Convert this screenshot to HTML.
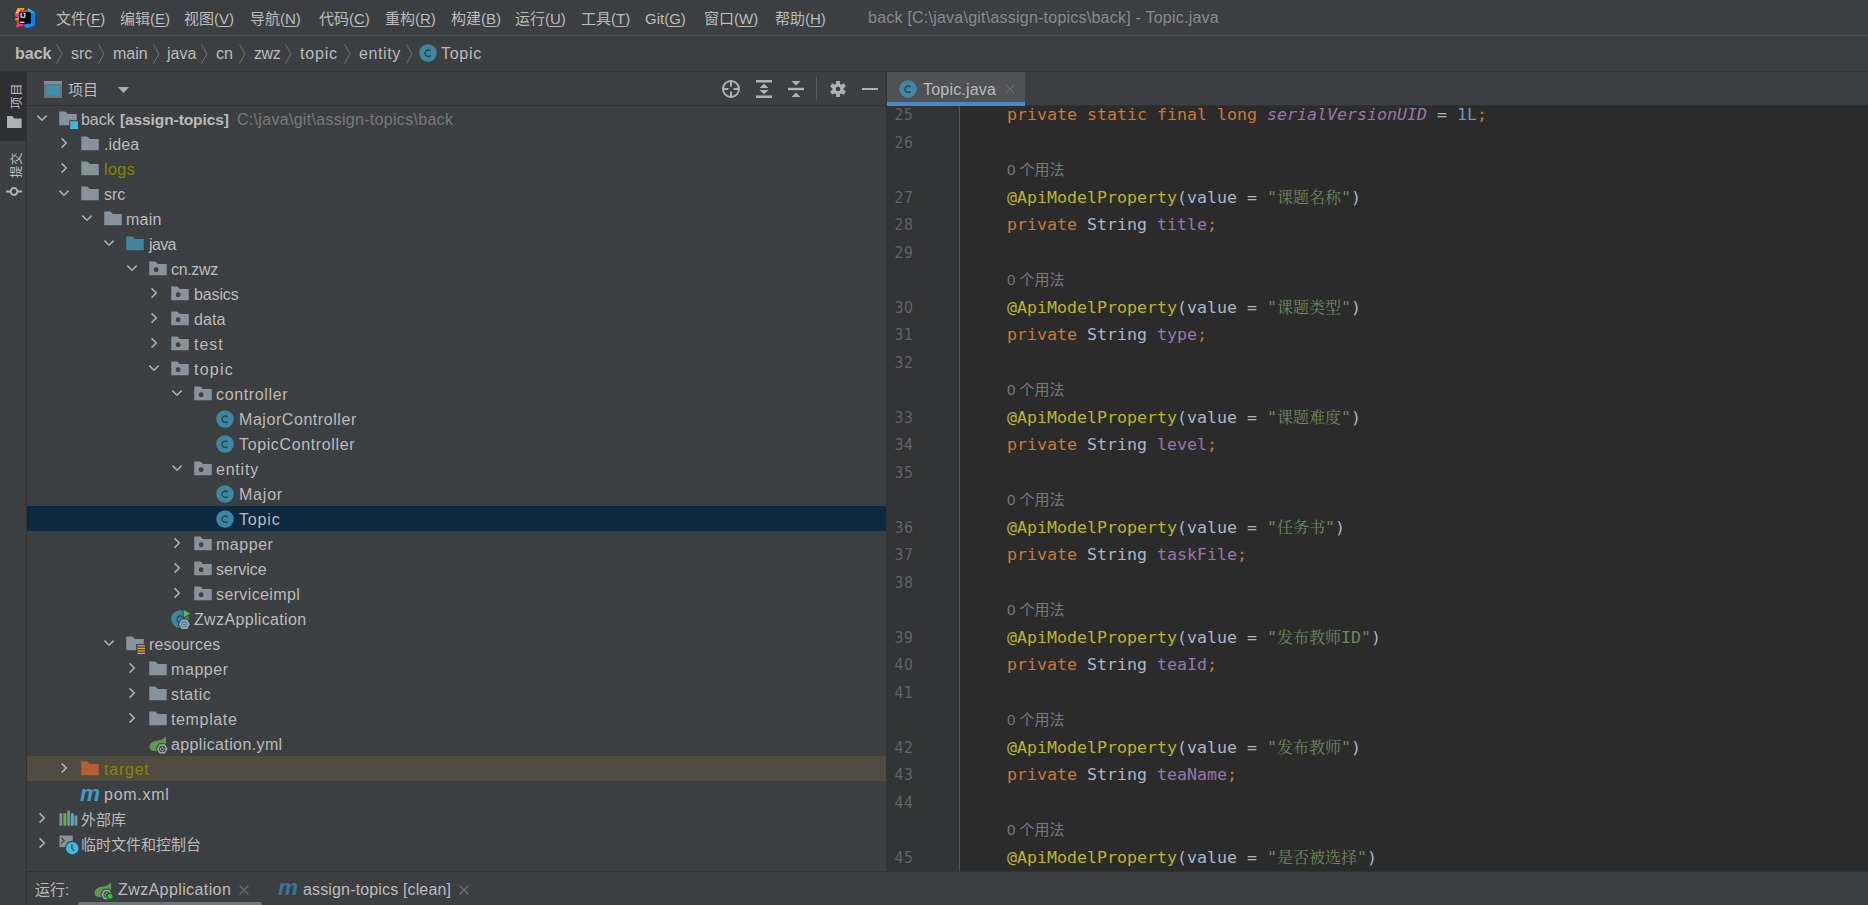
<!DOCTYPE html>
<html lang="zh"><head><meta charset="utf-8"><title>back - Topic.java</title>
<style>
*{box-sizing:border-box;margin:0;padding:0}
html,body{width:1868px;height:905px;overflow:hidden;background:#3c3f41}
body{position:relative;font-family:"Liberation Sans","Noto Sans CJK SC",sans-serif;font-size:15px;color:#bbbbbb}
.abs{position:absolute}
.t{position:absolute;white-space:pre;line-height:1}
u{text-decoration:underline;text-underline-offset:2px;text-decoration-thickness:1px}
#menubar{left:0;top:0;width:1868px;height:36px;border-bottom:1px solid #515151}
#navbar{left:0;top:36px;width:1868px;height:36px;border-bottom:1px solid #323232}
#strip{left:0;top:72px;width:27px;height:833px;border-right:1px solid #323232}
#proj{left:27px;top:72px;width:859px;height:799px;overflow:hidden}
#projhead{left:0;top:0;width:859px;height:34px;border-bottom:1px solid #323232}
.row{position:absolute;left:0;width:859px;height:25px}
.row .lbl{position:absolute;top:1px;height:25px;line-height:25px;white-space:pre;font-size:16px;letter-spacing:.5px}
.row .cj{font-size:15px;letter-spacing:0;top:1px}
.row svg{position:absolute}
#split{left:886px;top:72px;width:1px;height:799px;background:#323232}
#editor{left:887px;top:72px;width:981px;height:799px;overflow:hidden;background:#2b2b2b}
#tabs{left:0;top:0;width:981px;height:34px;background:#3c3f41;border-bottom:1px solid #323232}
#tab{left:0;top:0;width:138px;height:34px;background:#4e5254;border-bottom:4px solid #4a88c7}
#gutter{left:0;top:34px;width:73px;height:765px;background:#313335;border-right:1px solid #555555}
.ln{position:absolute;left:7.5px;font-family:"DejaVu Sans Condensed","Liberation Sans",sans-serif;font-size:15.6px;letter-spacing:.6px;color:#606366;height:27.5px;line-height:27.5px;white-space:pre}
.cl{position:absolute;left:120px;font-family:"DejaVu Sans Mono","Liberation Mono","Noto Serif CJK SC",monospace;font-size:16.61px;color:#a9b7c6;height:27.5px;line-height:27.5px;white-space:pre}
.hint{position:absolute;left:120px;font-size:15px;color:#787878;height:27.5px;line-height:27.5px;white-space:pre}
.z{font-size:16px} .k{color:#cc7832} .f{color:#9876aa} .a{color:#bbb529} .s{color:#6a8759} .n{color:#6897bb} .i{font-style:italic}
#bottom{left:27px;top:871px;width:1841px;height:34px;border-top:1px solid #323232}
</style></head>
<body>
<div id="menubar" class="abs">
<svg class="abs" style="left:14px;top:7px" width="22" height="22" viewBox="0 0 22 22">
<polygon points="3.5,1.2 10.5,1 8,7 1,7.5" fill="#fdb60d"/>
<polygon points="6.5,2.2 13,3.2 13.5,7 4.5,7" fill="#fe2857"/>
<polygon points="1,7.5 6,5 6,10.5 1.3,9.6" fill="#fc31a0"/>
<polygon points="1,11.5 6,9.8 6,13.8 1.5,13.5" fill="#fc801d"/>
<polygon points="2,20.6 3.4,13 9,16.5 9.5,18.4" fill="#fe2f6e"/>
<polygon points="13,3.2 14.6,1 21.2,6 17,7.5" fill="#07c3f2"/>
<polygon points="16.5,5.5 21.2,6 21,18.5 16.5,17.5" fill="#087cfa"/>
<polygon points="9,18.4 13.2,21.2 21,18.5 16.5,15" fill="#0a8df8"/>
<rect x="5" y="5.2" width="11.8" height="11.5" fill="#000"/>
<rect x="6" y="14.6" width="4.4" height="1.3" fill="#fff"/>
<text x="5.9" y="11.2" font-family="Liberation Sans,sans-serif" font-weight="bold" font-size="7.4" fill="#fff" style="letter-spacing:-.2px">IJ</text>
</svg>
<span class="t" style="left:56px;top:11px;font-size:15px">文件(<u>F</u>)</span>
<span class="t" style="left:120px;top:11px;font-size:15px">编辑(<u>E</u>)</span>
<span class="t" style="left:184px;top:11px;font-size:15px">视图(<u>V</u>)</span>
<span class="t" style="left:250px;top:11px;font-size:15px">导航(<u>N</u>)</span>
<span class="t" style="left:319px;top:11px;font-size:15px">代码(<u>C</u>)</span>
<span class="t" style="left:385px;top:11px;font-size:15px">重构(<u>R</u>)</span>
<span class="t" style="left:451px;top:11px;font-size:15px">构建(<u>B</u>)</span>
<span class="t" style="left:515px;top:11px;font-size:15px">运行(<u>U</u>)</span>
<span class="t" style="left:581px;top:11px;font-size:15px">工具(<u>T</u>)</span>
<span class="t" style="left:645px;top:11px;font-size:15px">Git(<u>G</u>)</span>
<span class="t" style="left:704px;top:11px;font-size:15px">窗口(<u>W</u>)</span>
<span class="t" style="left:775px;top:11px;font-size:15px">帮助(<u>H</u>)</span>
<span class="t" style="left:868px;top:10px;font-size:16px;letter-spacing:.23px;color:#87898b">back [C:\java\git\assign-topics\back] - Topic.java</span>
</div>
<div id="navbar" class="abs">
<span class="t" style="left:15px;top:10px;font-size:16px;letter-spacing:0px;font-weight:bold;">back</span>
<span class="t" style="left:71px;top:10px;font-size:16px;letter-spacing:0px;">src</span>
<span class="t" style="left:113px;top:10px;font-size:16px;letter-spacing:0px;">main</span>
<span class="t" style="left:167px;top:10px;font-size:16px;letter-spacing:0px;">java</span>
<span class="t" style="left:216px;top:10px;font-size:16px;letter-spacing:0px;">cn</span>
<span class="t" style="left:254px;top:10px;font-size:16px;letter-spacing:-0.4px;">zwz</span>
<span class="t" style="left:300px;top:10px;font-size:16px;letter-spacing:0.8px;">topic</span>
<span class="t" style="left:359px;top:10px;font-size:16px;letter-spacing:0.6px;">entity</span>
<svg class="abs" style="left:56px;top:8px" width="7" height="20" viewBox="0 0 7 20"><path d="M0.5 0.5 L6 10 L0.5 19.5" fill="none" stroke="#6e7072" stroke-width="1"/></svg>
<svg class="abs" style="left:98px;top:8px" width="7" height="20" viewBox="0 0 7 20"><path d="M0.5 0.5 L6 10 L0.5 19.5" fill="none" stroke="#6e7072" stroke-width="1"/></svg>
<svg class="abs" style="left:153px;top:8px" width="7" height="20" viewBox="0 0 7 20"><path d="M0.5 0.5 L6 10 L0.5 19.5" fill="none" stroke="#6e7072" stroke-width="1"/></svg>
<svg class="abs" style="left:201px;top:8px" width="7" height="20" viewBox="0 0 7 20"><path d="M0.5 0.5 L6 10 L0.5 19.5" fill="none" stroke="#6e7072" stroke-width="1"/></svg>
<svg class="abs" style="left:239px;top:8px" width="7" height="20" viewBox="0 0 7 20"><path d="M0.5 0.5 L6 10 L0.5 19.5" fill="none" stroke="#6e7072" stroke-width="1"/></svg>
<svg class="abs" style="left:285px;top:8px" width="7" height="20" viewBox="0 0 7 20"><path d="M0.5 0.5 L6 10 L0.5 19.5" fill="none" stroke="#6e7072" stroke-width="1"/></svg>
<svg class="abs" style="left:344px;top:8px" width="7" height="20" viewBox="0 0 7 20"><path d="M0.5 0.5 L6 10 L0.5 19.5" fill="none" stroke="#6e7072" stroke-width="1"/></svg>
<svg class="abs" style="left:406px;top:8px" width="7" height="20" viewBox="0 0 7 20"><path d="M0.5 0.5 L6 10 L0.5 19.5" fill="none" stroke="#6e7072" stroke-width="1"/></svg>
<svg class="abs" style="left:417.8px;top:7px" width="20" height="20" viewBox="0 0 16 16"><circle cx="8" cy="8" r="7" fill="#3e86a0"/><path d="M10.1 6.4 A2.6 2.6 0 1 0 10.1 10" fill="none" stroke="#274552" stroke-width="1.1"/></svg>
<span class="t" style="left:441px;top:10px;font-size:16px;letter-spacing:.7px">Topic</span>
</div>
<div id="strip" class="abs">
<div class="abs" style="left:0;top:0;width:26px;height:69px;background:#2d2f30"></div>
<span class="t" style="left:10.5px;top:36.5px;font-size:12.5px;letter-spacing:.4px;transform-origin:0 0;transform:rotate(-90deg);color:#bbbbbb">项目</span>
<svg class="abs" style="left:7px;top:44px" width="15" height="12" viewBox="0 0 15 12"><path d="M0 0 H5.2 L7.3 2.4 H14.6 V12 H0 Z" fill="#afb1b3"/></svg>
<span class="t" style="left:11px;top:106px;font-size:12.5px;letter-spacing:.4px;transform-origin:0 0;transform:rotate(-90deg);color:#bbbbbb">提交</span>
<svg class="abs" style="left:5px;top:114px" width="18" height="11" viewBox="0 0 18 11"><circle cx="9" cy="5.5" r="3.4" fill="none" stroke="#afb1b3" stroke-width="2"/><rect x="1" y="4.5" width="4.5" height="2" fill="#afb1b3"/><rect x="12.5" y="4.5" width="4.5" height="2" fill="#afb1b3"/></svg>
</div>
<div id="proj" class="abs">
<div id="projhead" class="abs">
<svg class="abs" style="left:17px;top:9px" width="18" height="17" viewBox="0 0 18 17"><rect x="0" y="0" width="18" height="17" fill="#68737a"/><rect x="0" y="0" width="18" height="3" fill="#808c94"/><rect x="2.5" y="5" width="13" height="9.5" fill="#3f91b0"/></svg>
<span class="t" style="left:41px;top:10px;font-size:15px">项目</span>
<svg class="abs" style="left:90.7px;top:15.4px" width="11" height="6" viewBox="0 0 11 6"><path d="M0 0 H11 L5.5 6 Z" fill="#afb1b3"/></svg>
<svg class="abs" style="left:694px;top:7px" width="20" height="20" viewBox="0 0 20 20"><circle cx="10" cy="10" r="8" fill="none" stroke="#afb1b3" stroke-width="2"/><path d="M10 2 V7.5 M10 12.5 V18 M2 10 H7.5 M12.5 10 H18" stroke="#afb1b3" stroke-width="2"/></svg>
<svg class="abs" style="left:729px;top:8px" width="16" height="18" viewBox="0 0 16 18"><rect x="0" y="0" width="16" height="2.5" fill="#afb1b3"/><rect x="0" y="15.5" width="16" height="2.5" fill="#afb1b3"/><path d="M3.5 8 L8 3.8 L12.5 8 Z M3.5 10 L8 14.2 L12.5 10 Z" fill="#afb1b3"/></svg>
<svg class="abs" style="left:761px;top:8px" width="16" height="18" viewBox="0 0 16 18"><rect x="0" y="7.8" width="16" height="2.4" fill="#afb1b3"/><path d="M3.5 1 L12.5 1 L8 5.6 Z M3.5 17 L12.5 17 L8 12.4 Z" fill="#afb1b3"/></svg>
<div class="abs" style="left:789px;top:5px;width:1px;height:24px;background:#5c5a55"></div>
<svg class="abs" style="left:803px;top:9px" width="16" height="16" viewBox="-8 -8 16 16"><g fill="#afb1b3"><circle r="5.6"/><rect x="-1.9" y="-8" width="3.8" height="4" transform="rotate(0)"/><rect x="-1.9" y="-8" width="3.8" height="4" transform="rotate(60)"/><rect x="-1.9" y="-8" width="3.8" height="4" transform="rotate(120)"/><rect x="-1.9" y="-8" width="3.8" height="4" transform="rotate(180)"/><rect x="-1.9" y="-8" width="3.8" height="4" transform="rotate(240)"/><rect x="-1.9" y="-8" width="3.8" height="4" transform="rotate(300)"/></g><circle r="2.3" fill="#3c3f41"/></svg>
<div class="abs" style="left:835px;top:16.3px;width:15.5px;height:2.2px;background:#afb1b3"></div>
</div>
<div class="row" style="top:34px;">
<svg style="left:7.799999999999997px;top:7.300000000000001px" width="14" height="10" viewBox="-7 -5 14 10"><path d="M-4.6 -2.4 L0 2.2 L4.6 -2.4" fill="none" stroke="#afb1b3" stroke-width="1.5"/></svg>
<svg style="left:30.5px;top:2.5px" width="20" height="20" viewBox="0 0 16 16"><path d="M1 13 H15 V4 H8 L6.7 2.7 C6.2 2.2 5.9 2 5.5 2 H1 Z" fill="#87939a"/><rect x="9" y="9" width="7.6" height="7.6" fill="#3c3f41"/><rect x="9.8" y="9.8" width="6.2" height="6.2" fill="#40b6e0"/></svg>
<span class="lbl" style="left:54px;color:#bbbbbb;letter-spacing:-.05px">back</span>
<span class="lbl" style="left:93px;color:#bbbbbb;font-weight:bold;font-size:15.5px;letter-spacing:-.1px">[assign-topics]</span>
<span class="lbl" style="left:210px;color:#787878;letter-spacing:.3px">C:\java\git\assign-topics\back</span>
</div>
<div class="row" style="top:59px;">
<svg style="left:32.3px;top:5px" width="10" height="14" viewBox="-5 -7 10 14"><path d="M-2.4 -4.6 L2.2 0 L-2.4 4.6" fill="none" stroke="#afb1b3" stroke-width="1.5"/></svg>
<svg style="left:53.0px;top:2.5px" width="20" height="20" viewBox="0 0 16 16"><path d="M1 13 H15 V4 H8 L6.7 2.7 C6.2 2.2 5.9 2 5.5 2 H1 Z" fill="#87939a"/></svg>
<span class="lbl" style="left:77px;color:#bbbbbb;letter-spacing:0.1px">.idea</span>
</div>
<div class="row" style="top:84px;">
<svg style="left:32.3px;top:5px" width="10" height="14" viewBox="-5 -7 10 14"><path d="M-2.4 -4.6 L2.2 0 L-2.4 4.6" fill="none" stroke="#afb1b3" stroke-width="1.5"/></svg>
<svg style="left:53.0px;top:2.5px" width="20" height="20" viewBox="0 0 16 16"><path d="M1 13 H15 V4 H8 L6.7 2.7 C6.2 2.2 5.9 2 5.5 2 H1 Z" fill="#87939a"/></svg>
<span class="lbl" style="left:77px;color:#848504;letter-spacing:0.44px">logs</span>
</div>
<div class="row" style="top:109px;">
<svg style="left:30.299999999999997px;top:7.300000000000001px" width="14" height="10" viewBox="-7 -5 14 10"><path d="M-4.6 -2.4 L0 2.2 L4.6 -2.4" fill="none" stroke="#afb1b3" stroke-width="1.5"/></svg>
<svg style="left:53.0px;top:2.5px" width="20" height="20" viewBox="0 0 16 16"><path d="M1 13 H15 V4 H8 L6.7 2.7 C6.2 2.2 5.9 2 5.5 2 H1 Z" fill="#87939a"/></svg>
<span class="lbl" style="left:77px;color:#bbbbbb;letter-spacing:-0.1px">src</span>
</div>
<div class="row" style="top:134px;">
<svg style="left:52.8px;top:7.300000000000001px" width="14" height="10" viewBox="-7 -5 14 10"><path d="M-4.6 -2.4 L0 2.2 L4.6 -2.4" fill="none" stroke="#afb1b3" stroke-width="1.5"/></svg>
<svg style="left:75.5px;top:2.5px" width="20" height="20" viewBox="0 0 16 16"><path d="M1 13 H15 V4 H8 L6.7 2.7 C6.2 2.2 5.9 2 5.5 2 H1 Z" fill="#87939a"/></svg>
<span class="lbl" style="left:99px;color:#bbbbbb;letter-spacing:0.23px">main</span>
</div>
<div class="row" style="top:159px;">
<svg style="left:75.3px;top:7.300000000000001px" width="14" height="10" viewBox="-7 -5 14 10"><path d="M-4.6 -2.4 L0 2.2 L4.6 -2.4" fill="none" stroke="#afb1b3" stroke-width="1.5"/></svg>
<svg style="left:98.0px;top:2.5px" width="20" height="20" viewBox="0 0 16 16"><path d="M1 13 H15 V4 H8 L6.7 2.7 C6.2 2.2 5.9 2 5.5 2 H1 Z" fill="#3e86a0"/></svg>
<span class="lbl" style="left:122px;color:#bbbbbb;letter-spacing:-0.64px">java</span>
</div>
<div class="row" style="top:184px;">
<svg style="left:97.8px;top:7.300000000000001px" width="14" height="10" viewBox="-7 -5 14 10"><path d="M-4.6 -2.4 L0 2.2 L4.6 -2.4" fill="none" stroke="#afb1b3" stroke-width="1.5"/></svg>
<svg style="left:120.5px;top:2.5px" width="20" height="20" viewBox="0 0 16 16"><path d="M1 13 H15 V4 H8 L6.7 2.7 C6.2 2.2 5.9 2 5.5 2 H1 Z" fill="#87939a"/><circle cx="6.5" cy="8.6" r="1.95" fill="#3b4145"/></svg>
<span class="lbl" style="left:144px;color:#bbbbbb;letter-spacing:-0.34px">cn.zwz</span>
</div>
<div class="row" style="top:209px;">
<svg style="left:122.3px;top:5px" width="10" height="14" viewBox="-5 -7 10 14"><path d="M-2.4 -4.6 L2.2 0 L-2.4 4.6" fill="none" stroke="#afb1b3" stroke-width="1.5"/></svg>
<svg style="left:143.0px;top:2.5px" width="20" height="20" viewBox="0 0 16 16"><path d="M1 13 H15 V4 H8 L6.7 2.7 C6.2 2.2 5.9 2 5.5 2 H1 Z" fill="#87939a"/><circle cx="6.5" cy="8.6" r="1.95" fill="#3b4145"/></svg>
<span class="lbl" style="left:167px;color:#bbbbbb;letter-spacing:-0.14px">basics</span>
</div>
<div class="row" style="top:234px;">
<svg style="left:122.3px;top:5px" width="10" height="14" viewBox="-5 -7 10 14"><path d="M-2.4 -4.6 L2.2 0 L-2.4 4.6" fill="none" stroke="#afb1b3" stroke-width="1.5"/></svg>
<svg style="left:143.0px;top:2.5px" width="20" height="20" viewBox="0 0 16 16"><path d="M1 13 H15 V4 H8 L6.7 2.7 C6.2 2.2 5.9 2 5.5 2 H1 Z" fill="#87939a"/><circle cx="6.5" cy="8.6" r="1.95" fill="#3b4145"/></svg>
<span class="lbl" style="left:167px;color:#bbbbbb;letter-spacing:0.1px">data</span>
</div>
<div class="row" style="top:259px;">
<svg style="left:122.3px;top:5px" width="10" height="14" viewBox="-5 -7 10 14"><path d="M-2.4 -4.6 L2.2 0 L-2.4 4.6" fill="none" stroke="#afb1b3" stroke-width="1.5"/></svg>
<svg style="left:143.0px;top:2.5px" width="20" height="20" viewBox="0 0 16 16"><path d="M1 13 H15 V4 H8 L6.7 2.7 C6.2 2.2 5.9 2 5.5 2 H1 Z" fill="#87939a"/><circle cx="6.5" cy="8.6" r="1.95" fill="#3b4145"/></svg>
<span class="lbl" style="left:167px;color:#bbbbbb;letter-spacing:0.96px">test</span>
</div>
<div class="row" style="top:284px;">
<svg style="left:120.3px;top:7.300000000000001px" width="14" height="10" viewBox="-7 -5 14 10"><path d="M-4.6 -2.4 L0 2.2 L4.6 -2.4" fill="none" stroke="#afb1b3" stroke-width="1.5"/></svg>
<svg style="left:143.0px;top:2.5px" width="20" height="20" viewBox="0 0 16 16"><path d="M1 13 H15 V4 H8 L6.7 2.7 C6.2 2.2 5.9 2 5.5 2 H1 Z" fill="#87939a"/><circle cx="6.5" cy="8.6" r="1.95" fill="#3b4145"/></svg>
<span class="lbl" style="left:167px;color:#bbbbbb;letter-spacing:1.25px">topic</span>
</div>
<div class="row" style="top:309px;">
<svg style="left:142.8px;top:7.300000000000001px" width="14" height="10" viewBox="-7 -5 14 10"><path d="M-4.6 -2.4 L0 2.2 L4.6 -2.4" fill="none" stroke="#afb1b3" stroke-width="1.5"/></svg>
<svg style="left:165.5px;top:2.5px" width="20" height="20" viewBox="0 0 16 16"><path d="M1 13 H15 V4 H8 L6.7 2.7 C6.2 2.2 5.9 2 5.5 2 H1 Z" fill="#87939a"/><circle cx="6.5" cy="8.6" r="1.95" fill="#3b4145"/></svg>
<span class="lbl" style="left:189px;color:#bbbbbb;letter-spacing:0.65px">controller</span>
</div>
<div class="row" style="top:334px;">
<svg style="left:188.0px;top:2.5px" width="20" height="20" viewBox="0 0 16 16"><circle cx="8" cy="8" r="7" fill="#3e86a0"/><path d="M10.1 6.4 A2.6 2.6 0 1 0 10.1 10" fill="none" stroke="#274552" stroke-width="1.1"/></svg>
<span class="lbl" style="left:212px;color:#bbbbbb;letter-spacing:0.56px">MajorController</span>
</div>
<div class="row" style="top:359px;">
<svg style="left:188.0px;top:2.5px" width="20" height="20" viewBox="0 0 16 16"><circle cx="8" cy="8" r="7" fill="#3e86a0"/><path d="M10.1 6.4 A2.6 2.6 0 1 0 10.1 10" fill="none" stroke="#274552" stroke-width="1.1"/></svg>
<span class="lbl" style="left:212px;color:#bbbbbb;letter-spacing:0.63px">TopicController</span>
</div>
<div class="row" style="top:384px;">
<svg style="left:142.8px;top:7.300000000000001px" width="14" height="10" viewBox="-7 -5 14 10"><path d="M-4.6 -2.4 L0 2.2 L4.6 -2.4" fill="none" stroke="#afb1b3" stroke-width="1.5"/></svg>
<svg style="left:165.5px;top:2.5px" width="20" height="20" viewBox="0 0 16 16"><path d="M1 13 H15 V4 H8 L6.7 2.7 C6.2 2.2 5.9 2 5.5 2 H1 Z" fill="#87939a"/><circle cx="6.5" cy="8.6" r="1.95" fill="#3b4145"/></svg>
<span class="lbl" style="left:189px;color:#bbbbbb;letter-spacing:0.78px">entity</span>
</div>
<div class="row" style="top:409px;">
<svg style="left:188.0px;top:2.5px" width="20" height="20" viewBox="0 0 16 16"><circle cx="8" cy="8" r="7" fill="#3e86a0"/><path d="M10.1 6.4 A2.6 2.6 0 1 0 10.1 10" fill="none" stroke="#274552" stroke-width="1.1"/></svg>
<span class="lbl" style="left:212px;color:#bbbbbb;letter-spacing:0.79px">Major</span>
</div>
<div class="row" style="top:434px;background:#0d293e;">
<svg style="left:188.0px;top:2.5px" width="20" height="20" viewBox="0 0 16 16"><circle cx="8" cy="8" r="7" fill="#3887a8"/><path d="M10.1 6.4 A2.6 2.6 0 1 0 10.1 10" fill="none" stroke="#274552" stroke-width="1.1"/></svg>
<span class="lbl" style="left:212px;color:#bbbbbb;letter-spacing:0.85px">Topic</span>
</div>
<div class="row" style="top:459px;">
<svg style="left:144.8px;top:5px" width="10" height="14" viewBox="-5 -7 10 14"><path d="M-2.4 -4.6 L2.2 0 L-2.4 4.6" fill="none" stroke="#afb1b3" stroke-width="1.5"/></svg>
<svg style="left:165.5px;top:2.5px" width="20" height="20" viewBox="0 0 16 16"><path d="M1 13 H15 V4 H8 L6.7 2.7 C6.2 2.2 5.9 2 5.5 2 H1 Z" fill="#87939a"/><circle cx="6.5" cy="8.6" r="1.95" fill="#3b4145"/></svg>
<span class="lbl" style="left:189px;color:#bbbbbb;letter-spacing:0.54px">mapper</span>
</div>
<div class="row" style="top:484px;">
<svg style="left:144.8px;top:5px" width="10" height="14" viewBox="-5 -7 10 14"><path d="M-2.4 -4.6 L2.2 0 L-2.4 4.6" fill="none" stroke="#afb1b3" stroke-width="1.5"/></svg>
<svg style="left:165.5px;top:2.5px" width="20" height="20" viewBox="0 0 16 16"><path d="M1 13 H15 V4 H8 L6.7 2.7 C6.2 2.2 5.9 2 5.5 2 H1 Z" fill="#87939a"/><circle cx="6.5" cy="8.6" r="1.95" fill="#3b4145"/></svg>
<span class="lbl" style="left:189px;color:#bbbbbb;letter-spacing:0.0px">service</span>
</div>
<div class="row" style="top:509px;">
<svg style="left:144.8px;top:5px" width="10" height="14" viewBox="-5 -7 10 14"><path d="M-2.4 -4.6 L2.2 0 L-2.4 4.6" fill="none" stroke="#afb1b3" stroke-width="1.5"/></svg>
<svg style="left:165.5px;top:2.5px" width="20" height="20" viewBox="0 0 16 16"><path d="M1 13 H15 V4 H8 L6.7 2.7 C6.2 2.2 5.9 2 5.5 2 H1 Z" fill="#87939a"/><circle cx="6.5" cy="8.6" r="1.95" fill="#3b4145"/></svg>
<span class="lbl" style="left:189px;color:#bbbbbb;letter-spacing:0.38px">serviceimpl</span>
</div>
<div class="row" style="top:534px;">
<svg style="left:143.0px;top:2.5px" width="21.25" height="21.25" viewBox="0 0 17 17"><circle cx="8" cy="8" r="7" fill="#3e86a0"/><path d="M10.1 6.4 A2.6 2.6 0 1 0 10.1 10" fill="none" stroke="#274552" stroke-width="1.1"/><path d="M10.2 -1 L17.4 3.6 L10.2 8.2 Z" fill="#3c3f41"/><path d="M10.9 0.5 L16.1 3.6 L10.9 6.7 Z" fill="#62b543"/><path d="M7.10 12.20 L9.30 8.37 H13.70 L15.90 12.20 L13.70 16.03 H9.30 Z" fill="#3c3f41" stroke="#3c3f41" stroke-width="1.6" stroke-linejoin="round"/><path d="M7.10 12.20 L9.30 8.37 H13.70 L15.90 12.20 L13.70 16.03 H9.30 Z" fill="#9aa7b0"/><circle cx="11.5" cy="12.2" r="2.55" fill="#3e86a0"/><path d="M10.45 11.25 A1.5 1.5 0 1 0 12.55 11.25" fill="none" stroke="#aab4bb" stroke-width=".75"/><path d="M11.5 10.30 V12.10" stroke="#aab4bb" stroke-width=".75"/></svg>
<span class="lbl" style="left:167px;color:#bbbbbb;letter-spacing:0.35px">ZwzApplication</span>
</div>
<div class="row" style="top:559px;">
<svg style="left:75.3px;top:7.300000000000001px" width="14" height="10" viewBox="-7 -5 14 10"><path d="M-4.6 -2.4 L0 2.2 L4.6 -2.4" fill="none" stroke="#afb1b3" stroke-width="1.5"/></svg>
<svg style="left:98.0px;top:2.5px" width="21.25" height="21.25" viewBox="0 0 17 17"><path d="M1 13 H15 V4 H8 L6.7 2.7 C6.2 2.2 5.9 2 5.5 2 H1 Z" fill="#87939a"/><rect x="9" y="8" width="8" height="9" fill="#3c3f41"/><path d="M10 9.5 H16 M10 11.5 H16 M10 13.5 H16 M10 15.5 H16" stroke="#e8a73f" stroke-width="1"/></svg>
<span class="lbl" style="left:122px;color:#bbbbbb;letter-spacing:0.12px">resources</span>
</div>
<div class="row" style="top:584px;">
<svg style="left:99.8px;top:5px" width="10" height="14" viewBox="-5 -7 10 14"><path d="M-2.4 -4.6 L2.2 0 L-2.4 4.6" fill="none" stroke="#afb1b3" stroke-width="1.5"/></svg>
<svg style="left:120.5px;top:2.5px" width="20" height="20" viewBox="0 0 16 16"><path d="M1 13 H15 V4 H8 L6.7 2.7 C6.2 2.2 5.9 2 5.5 2 H1 Z" fill="#87939a"/></svg>
<span class="lbl" style="left:144px;color:#bbbbbb;letter-spacing:0.58px">mapper</span>
</div>
<div class="row" style="top:609px;">
<svg style="left:99.8px;top:5px" width="10" height="14" viewBox="-5 -7 10 14"><path d="M-2.4 -4.6 L2.2 0 L-2.4 4.6" fill="none" stroke="#afb1b3" stroke-width="1.5"/></svg>
<svg style="left:120.5px;top:2.5px" width="20" height="20" viewBox="0 0 16 16"><path d="M1 13 H15 V4 H8 L6.7 2.7 C6.2 2.2 5.9 2 5.5 2 H1 Z" fill="#87939a"/></svg>
<span class="lbl" style="left:144px;color:#bbbbbb;letter-spacing:0.46px">static</span>
</div>
<div class="row" style="top:634px;">
<svg style="left:99.8px;top:5px" width="10" height="14" viewBox="-5 -7 10 14"><path d="M-2.4 -4.6 L2.2 0 L-2.4 4.6" fill="none" stroke="#afb1b3" stroke-width="1.5"/></svg>
<svg style="left:120.5px;top:2.5px" width="20" height="20" viewBox="0 0 16 16"><path d="M1 13 H15 V4 H8 L6.7 2.7 C6.2 2.2 5.9 2 5.5 2 H1 Z" fill="#87939a"/></svg>
<span class="lbl" style="left:144px;color:#bbbbbb;letter-spacing:0.64px">template</span>
</div>
<div class="row" style="top:659px;">
<svg style="left:120.5px;top:2.5px" width="21.25" height="21.25" viewBox="0 0 17 17"><path d="M1.30 11.20 C0.60 7.10 4.50 5.30 8.20 5.10 C10.80 4.90 12.80 3.50 13.90 1.90 C15.60 6.90 14.40 13.50 7.00 13.70 C5.20 13.80 3.40 13.50 2.20 12.80 Z" fill="#5a9c4b"/><path d="M7.10 11.90 L9.25 8.16 H13.55 L15.70 11.90 L13.55 15.64 H9.25 Z" fill="#3c3f41" stroke="#3c3f41" stroke-width="1.6" stroke-linejoin="round"/><path d="M7.10 11.90 L9.25 8.16 H13.55 L15.70 11.90 L13.55 15.64 H9.25 Z" fill="#9aa7b0"/><circle cx="11.4" cy="11.9" r="2.55" fill="#3c3f41"/><path d="M10.35 10.95 A1.5 1.5 0 1 0 12.45 10.95" fill="none" stroke="#aab4bb" stroke-width=".75"/><path d="M11.4 10.00 V11.80" stroke="#aab4bb" stroke-width=".75"/></svg>
<span class="lbl" style="left:144px;color:#bbbbbb;letter-spacing:0.38px">application.yml</span>
</div>
<div class="row" style="top:684px;background:#4f4b41;">
<svg style="left:32.3px;top:5px" width="10" height="14" viewBox="-5 -7 10 14"><path d="M-2.4 -4.6 L2.2 0 L-2.4 4.6" fill="none" stroke="#afb1b3" stroke-width="1.5"/></svg>
<svg style="left:53.0px;top:2.5px" width="20" height="20" viewBox="0 0 16 16"><path d="M1 13 H15 V4 H8 L6.7 2.7 C6.2 2.2 5.9 2 5.5 2 H1 Z" fill="#b85f32"/></svg>
<span class="lbl" style="left:77px;color:#848504;letter-spacing:0.78px">target</span>
</div>
<div class="row" style="top:709px;">
<span class="lbl" style="left:53.0px;top:0px;font-size:22.5px;letter-spacing:0;font-weight:bold;font-style:italic;color:#3f9ec1;">m</span>
<span class="lbl" style="left:77px;color:#bbbbbb;letter-spacing:0.73px">pom.xml</span>
</div>
<div class="row" style="top:734px;">
<svg style="left:9.799999999999997px;top:5px" width="10" height="14" viewBox="-5 -7 10 14"><path d="M-2.4 -4.6 L2.2 0 L-2.4 4.6" fill="none" stroke="#afb1b3" stroke-width="1.5"/></svg>
<svg style="left:30.5px;top:2.5px" width="20" height="20" viewBox="0 0 16 16"><rect x="1.2" y="3.4" width="2.2" height="9.9" fill="#87939a"/><rect x="4.3" y="3.4" width="2.4" height="9.9" fill="#62b543"/><rect x="7.4" y="1.3" width="2.1" height="12" fill="#87939a"/><rect x="10.2" y="3.4" width="2.4" height="9.9" fill="#40b6e0"/><rect x="13.2" y="5.2" width="2.3" height="8.1" fill="#87939a"/></svg>
<span class="lbl cj" style="left:54px;color:#bbbbbb">外部库</span>
</div>
<div class="row" style="top:759px;">
<svg style="left:9.799999999999997px;top:5px" width="10" height="14" viewBox="-5 -7 10 14"><path d="M-2.4 -4.6 L2.2 0 L-2.4 4.6" fill="none" stroke="#afb1b3" stroke-width="1.5"/></svg>
<svg style="left:30.5px;top:2.5px" width="21.25" height="21.25" viewBox="0 0 17 17"><rect x="1.2" y="1.2" width="10.6" height="9.3" fill="#87939a"/><path d="M2.6 3.1 L5 5.3 L2.6 7.5" fill="none" stroke="#3f464b" stroke-width="1"/><circle cx="11.4" cy="11.3" r="5.9" fill="#3c3f41"/><circle cx="11.4" cy="11.3" r="5" fill="#40b6e0"/><path d="M11.1 8.3 V11.6 L13 13.4" fill="none" stroke="#275a6e" stroke-width="1.1"/></svg>
<span class="lbl cj" style="left:54px;color:#bbbbbb">临时文件和控制台</span>
</div>
</div>
<div id="split" class="abs"></div>
<div id="editor" class="abs">
<div id="tabs" class="abs"><div id="tab" class="abs">
<svg class="abs" style="left:11px;top:7px" width="20" height="20" viewBox="0 0 16 16"><circle cx="8" cy="8" r="7" fill="#4189a3"/><path d="M10.1 6.4 A2.6 2.6 0 1 0 10.1 10" fill="none" stroke="#274552" stroke-width="1.1"/></svg>
<span class="t" style="left:36px;top:10px;font-size:16px;letter-spacing:.2px;color:#bbbbbb">Topic.java</span>
<svg class="abs" style="left:118px;top:12px" width="10" height="10" viewBox="0 0 10 10"><path d="M0.5 0.5 L9.5 9.5 M9.5 0.5 L0.5 9.5" stroke="#6e7072" stroke-width="1"/></svg>
</div></div>
<div id="gutter" class="abs"></div>
<div class="ln" style="top:30px">25</div>
<div class="cl" style="top:29px"><span class="k">private static final long</span> <span class="f i">serialVersionUID</span> = <span class="n">1L</span><span class="k">;</span></div>
<div class="ln" style="top:58px">26</div>
<div class="hint" style="top:84px">0 个用法</div>
<div class="ln" style="top:113px">27</div>
<div class="cl" style="top:112px"><span class="a">@ApiModelProperty</span>(value = <span class="s">"<span class="z">课题名称</span>"</span>)</div>
<div class="ln" style="top:140px">28</div>
<div class="cl" style="top:139px"><span class="k">private</span> String <span class="f">title</span><span class="k">;</span></div>
<div class="ln" style="top:168px">29</div>
<div class="hint" style="top:194px">0 个用法</div>
<div class="ln" style="top:223px">30</div>
<div class="cl" style="top:222px"><span class="a">@ApiModelProperty</span>(value = <span class="s">"<span class="z">课题类型</span>"</span>)</div>
<div class="ln" style="top:250px">31</div>
<div class="cl" style="top:249px"><span class="k">private</span> String <span class="f">type</span><span class="k">;</span></div>
<div class="ln" style="top:278px">32</div>
<div class="hint" style="top:304px">0 个用法</div>
<div class="ln" style="top:333px">33</div>
<div class="cl" style="top:332px"><span class="a">@ApiModelProperty</span>(value = <span class="s">"<span class="z">课题难度</span>"</span>)</div>
<div class="ln" style="top:360px">34</div>
<div class="cl" style="top:359px"><span class="k">private</span> String <span class="f">level</span><span class="k">;</span></div>
<div class="ln" style="top:388px">35</div>
<div class="hint" style="top:414px">0 个用法</div>
<div class="ln" style="top:443px">36</div>
<div class="cl" style="top:442px"><span class="a">@ApiModelProperty</span>(value = <span class="s">"<span class="z">任务书</span>"</span>)</div>
<div class="ln" style="top:470px">37</div>
<div class="cl" style="top:469px"><span class="k">private</span> String <span class="f">taskFile</span><span class="k">;</span></div>
<div class="ln" style="top:498px">38</div>
<div class="hint" style="top:524px">0 个用法</div>
<div class="ln" style="top:553px">39</div>
<div class="cl" style="top:552px"><span class="a">@ApiModelProperty</span>(value = <span class="s">"<span class="z">发布教师</span>ID"</span>)</div>
<div class="ln" style="top:580px">40</div>
<div class="cl" style="top:579px"><span class="k">private</span> String <span class="f">teaId</span><span class="k">;</span></div>
<div class="ln" style="top:608px">41</div>
<div class="hint" style="top:634px">0 个用法</div>
<div class="ln" style="top:663px">42</div>
<div class="cl" style="top:662px"><span class="a">@ApiModelProperty</span>(value = <span class="s">"<span class="z">发布教师</span>"</span>)</div>
<div class="ln" style="top:690px">43</div>
<div class="cl" style="top:689px"><span class="k">private</span> String <span class="f">teaName</span><span class="k">;</span></div>
<div class="ln" style="top:718px">44</div>
<div class="hint" style="top:744px">0 个用法</div>
<div class="ln" style="top:773px">45</div>
<div class="cl" style="top:772px"><span class="a">@ApiModelProperty</span>(value = <span class="s">"<span class="z">是否被选择</span>"</span>)</div>
</div>
<div id="bottom" class="abs">
<span class="t" style="left:8px;top:10px;font-size:15px">运行:</span>
<svg class="abs" style="left:66px;top:8px" width="21.25" height="21.25" viewBox="0 0 17 17"><path d="M1.30 11.20 C0.60 7.10 4.50 5.30 8.20 5.10 C10.80 4.90 12.80 3.50 13.90 1.90 C15.60 6.90 14.40 13.50 7.00 13.70 C5.20 13.80 3.40 13.50 2.20 12.80 Z" fill="#5a9c4b"/><path d="M6.60 11.60 L8.80 7.77 H13.20 L15.40 11.60 L13.20 15.43 H8.80 Z" fill="#3c3f41" stroke="#3c3f41" stroke-width="1.6" stroke-linejoin="round"/><path d="M6.60 11.60 L8.80 7.77 H13.20 L15.40 11.60 L13.20 15.43 H8.80 Z" fill="#9aa7b0"/><circle cx="11.0" cy="11.6" r="2.55" fill="#3c3f41"/><path d="M9.95 10.65 A1.5 1.5 0 1 0 12.05 10.65" fill="none" stroke="#aab4bb" stroke-width=".75"/><path d="M11.0 9.70 V11.50" stroke="#aab4bb" stroke-width=".75"/><circle cx="13.6" cy="13" r="2.8" fill="#3c3f41"/><circle cx="13.6" cy="13" r="2" fill="#0fdc0f"/></svg>
<span class="t" style="left:91px;top:10px;font-size:16px;letter-spacing:.4px">ZwzApplication</span>
<svg class="abs" style="left:212px;top:13px" width="10" height="10" viewBox="0 0 10 10"><path d="M0.5 0.5 L9.5 9.5 M9.5 0.5 L0.5 9.5" stroke="#6e7072" stroke-width="1.1"/></svg>
<span class="t" style="left:251px;top:5px;font-size:22.5px;font-weight:bold;font-style:italic;color:#39768f">m</span>
<span class="t" style="left:276px;top:10px;font-size:16px;letter-spacing:.15px">assign-topics [clean]</span>
<svg class="abs" style="left:432px;top:13px" width="10" height="10" viewBox="0 0 10 10"><path d="M0.5 0.5 L9.5 9.5 M9.5 0.5 L0.5 9.5" stroke="#6e7072" stroke-width="1.1"/></svg>
<div class="abs" style="left:51px;top:30px;width:184px;height:4px;background:#70757a;border-radius:3px 3px 0 0"></div>
</div>
</body></html>
